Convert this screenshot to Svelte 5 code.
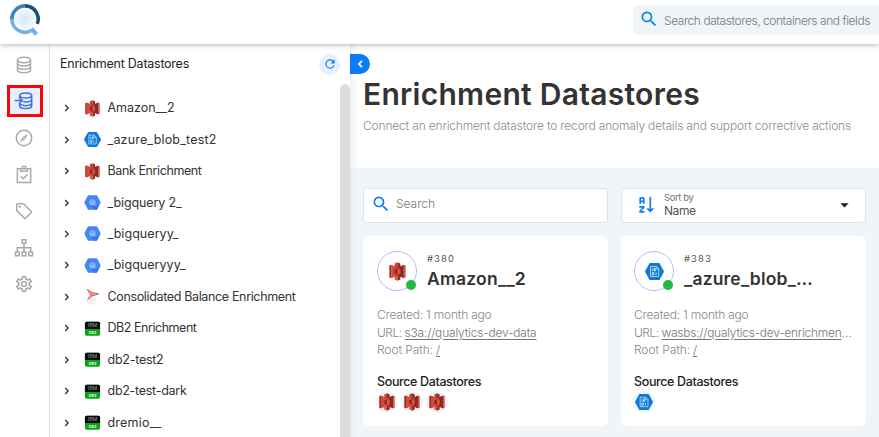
<script>
  const datastores = [
    { name: 'Amazon__2', kind: 's3', width: 67 },
    { name: '_azure_blob_test2', kind: 'azure', width: 109 },
    { name: 'Bank Enrichment', kind: 's3', width: 94 },
    { name: '_bigquery 2_', kind: 'bigquery', width: 74 },
    { name: '_bigqueryy_', kind: 'bigquery', width: 71 },
    { name: '_bigqueryyy_', kind: 'bigquery', width: 78 },
    { name: 'Consolidated Balance Enrichment', kind: 'sqlserver', width: 188 },
    { name: 'DB2 Enrichment', kind: 'db2', width: 89 },
    { name: 'db2-test2', kind: 'db2', width: 56 },
    { name: 'db2-test-dark', kind: 'db2', width: 79 },
    { name: 'dremio__', kind: 'db2', width: 54 }
  ];

  const cards = [
    { id: '#380', name: 'Amazon__2', nameWidth: 99, kind: 's3', url: 's3a://qualytics-dev-data', urlWidth: 132, more: '', sources: ['s3', 's3', 's3'] },
    { id: '#383', name: '_azure_blob_…', nameWidth: 129, kind: 'azure', url: 'wasbs://qualytics-dev-enrichmen', urlWidth: 180, more: '…', sources: ['azure'] }
  ];

  const nav = ['db', 'enrich', 'explore', 'checks', 'tags', 'tree', 'settings'];

  // Tracks the letters so that a label fills the given width.
  function track(node, width) {
    const natural = node.getBoundingClientRect().width;
    node.style.letterSpacing = `${(width - natural) / [...node.textContent].length}px`;
  }
</script>

{#snippet brand(kind, size)}
  {#if kind === 's3'}
    <svg width={size} height={size} viewBox="0 0 18 18">
      <path d="M1.300 3.200 3 2.600V15.400L1.300 14.800z" fill="#a32a22" />
      <path d="M3 2.600 7.500 4.500V13.500L3 15.400z" fill="#d9473b" />
      <path d="M16.700 3.200 15 2.600V15.400L16.700 14.800z" fill="#e05243" />
      <path d="M15 2.600 10.500 4.500V13.500L15 15.400z" fill="#8c2a22" />
      <path d="M7.500 4.500h3v9h-3z" fill="#b3342a" />
      <path d="M9 .2 6.300 1.400V4.800L9 5.300z" fill="#c83f35" /><path d="M9 .2l2.700 1.200V4.800L9 5.300z" fill="#8c3123" />
      <path d="M9 17.800l-2.700-1.200V13.200L9 12.700z" fill="#e05243" /><path d="M9 17.800l2.700-1.200V13.200L9 12.700z" fill="#8c3123" />
      <path d="M9 6.400 6.300 7v4L9 11.600z" fill="#8c2a22" /><path d="M9 6.400l2.700.6v4L9 11.600z" fill="#e05243" />
    </svg>
  {:else if kind === 'azure'}
    <svg width={size} height={size} viewBox="0 0 18 18">
      <path d="M5 1h8q.6 0 .9.500l3.800 6.800q.3.700 0 1.400l-3.800 6.800q-.3.500-.9.500H5q-.6 0-.9-.500L.3 9.700Q0 9 .3 8.300l3.800-6.800Q4.400 1 5 1z" fill="#0c79d8" />
      <path d="M5.200 4.300h5.600l2.200 2.200v7.200H5.200z" fill="none" stroke="#e4f2fd" stroke-width=".7" />
      <path d="M10.600 4.500v2.300h2.200" fill="none" stroke="#e4f2fd" stroke-width=".6" />
      <path d="M7 6.200v2.300M8.500 6.200h1.300v2.300H8.500zM7 10h1.300v2.300H7zM10.500 10v2.300" fill="none" stroke="#e4f2fd" stroke-width=".8" />
    </svg>
  {:else if kind === 'bigquery'}
    <svg width={size} height={size} viewBox="0 0 18 18">
      <path d="M5 1.200h8q.6 0 .9.500l3.500 6.600q.3.700 0 1.400l-3.500 6.600q-.3.500-.9.500H5q-.6 0-.9-.500L.6 9.700q-.3-.7 0-1.400l3.500-6.600q.3-.5.9-.500z" fill="#4386f5" />
      <path d="m11.500 11.500 4 1.500-2.200 3.600H11L7.500 12.500z" fill="#3a78dc" />
      <circle cx="8.900" cy="8.800" r="2.700" fill="none" stroke="#dce9ff" stroke-width=".8" />
      <path d="M7.800 8.600v1.200M8.900 7.700v2.500M10 9v.9M11 10.900l1.300 1.300" stroke="#dce9ff" stroke-width=".8" />
    </svg>
  {:else if kind === 'sqlserver'}
    <svg width={size} height={size} viewBox="0 0 18 18">
      <path d="M3 1.500c3.500.8 4.500 2.500 7 3.300l6 1.400-6.500 2.300-4.800 3.700 2.200-4.800z" fill="#f5c6c6" />
      <path d="M3 1.500c3 .8 4 2.500 6.500 3.500L15.500 6.200M4 2.500l3 4.800-3 5 5-4 6.500-2M7 4.500l1 3.500M10 5.300l-1 3" fill="none" stroke="#d9474b" stroke-width=".9" />
      <path d="m3.500 13 4-2.500 4.500 1-.5 4-4.500 2-3-1.800zM7.500 10.500l-.5 7M3.500 13l8.500-1.500" fill="#f4f6f8" stroke="#d5d9de" stroke-width=".5" />
    </svg>
  {:else}
    <svg width={size} height={size} viewBox="0 0 18 18">
      <rect x="1" y="1.800" width="16" height="14.900" rx="1.800" fill="#0aa314" />
      <path d="M1 9.400V3.600Q1 1.800 2.800 1.800h12.400q1.800 0 1.800 1.800v5.800z" fill="#080808" />
      <text x="4" y="7.800" font-size="5" fill="#a0a0a0" textLength="10" lengthAdjust="spacingAndGlyphs">IBM</text>
      <text x="5" y="14.400" font-size="4.300" font-weight="700" fill="#d9ffd9" textLength="8" lengthAdjust="spacingAndGlyphs">DB2</text>
    </svg>
  {/if}
{/snippet}

{#snippet magnify(size)}
  <svg class="blue" width={size} height={size} viewBox="0 0 24 24"><path d="M9.500 3A6.500 6.500 0 0 1 16 9.500C16 11.110 15.410 12.590 14.440 13.730L14.710 14H15.500L20.500 19L19 20.500L14 15.500V14.710L13.730 14.440C12.590 15.410 11.110 16 9.500 16A6.500 6.500 0 0 1 3 9.500A6.500 6.500 0 0 1 9.500 3M9.500 5C7 5 5 7 5 9.500C5 12 7 14 9.500 14C12 14 14 12 14 9.500C14 7 12 5 9.500 5Z" /></svg>
{/snippet}

<div class="app">
  <header>
    <svg class="logo" width="34" height="34" viewBox="0 0 34 34">
      <defs><radialGradient id="lens"><stop offset="0" stop-color="#d5eafb" /><stop offset="1" stop-color="#f1f8fd" /></radialGradient></defs>
      <circle cx="17" cy="16" r="10.300" fill="url(#lens)" />
      <g fill="none" stroke-width="3.600">
        <path d="M17 2.900A13.100 13.100 0 0 0 3.900 16.500" stroke="#3b83bd" />
        <path d="M17 2.900A13.100 13.100 0 0 1 29.200 20.900" stroke="#16527f" />
        <path d="M3.900 16A13.100 13.100 0 0 0 23 27.800" stroke="#73b1e4" />
        <path d="m23.500 25.500 4.800 5.800" stroke="#73b1e4" stroke-width="4.200" />
      </g>
    </svg>
    <div class="global-search">{@render magnify(20)}<span use:track={206}>Search datastores, containers and fields</span></div>
  </header>

  <div class="body">
    <nav>
      {#each nav as item}
        <div class="slot" class:active={item === 'enrich'}>
          <svg width="20" height="20" viewBox="0 0 24 24" fill="none" stroke="currentColor" stroke-width="1.800">
            {#if item === 'db'}
              <ellipse cx="12" cy="6" rx="7.800" ry="3.200" />
              <path d="M4.200 6v12c0 4.200 15.600 4.200 15.600 0V6M4.200 10c0 4.200 15.600 4.200 15.600 0M4.200 14c0 4.200 15.600 4.200 15.600 0" />
            {:else if item === 'enrich'}
              <ellipse cx="14" cy="5.500" rx="7.200" ry="3" />
              <path d="M6.800 5.500v2M6.800 15.500v2.500c0 4 14.400 4 14.400 0V5.500M11 12.700c4 1 10.200.2 10.200-2.700M7.500 15.700c2.500 2.800 13.700 2.500 13.700-1.700M.8 11.500H9.500M6 7.600l3.900 3.900L6 15.400" />
            {:else if item === 'explore'}
              <circle cx="12" cy="12" r="9.200" />
              <path d="m16.700 7.300-3.200 6.200-6.200 3.200 3.200-6.200z" fill="currentColor" stroke="none" /><circle cx="12" cy="12" r="1" fill="#fff" stroke="none" />
            {:else if item === 'checks'}
              <path d="M4 4.500h16v16.500H4zM8 4.500v3h8v-3M9.500 4a2.500 2.500 0 0 1 5 0M8 13.500l3 3 5.500-5.500" />
            {:else if item === 'tags'}
              <path d="M3.200 4.200q0-1 1-1h7.300l9.300 9.300q.7.700 0 1.400l-6.900 6.900q-.7.700-1.400 0L3.200 11.500z" /><circle cx="6.800" cy="6.800" r="1.400" fill="currentColor" stroke="none" />
            {:else if item === 'tree'}
              <path d="M9.800 2h4.400v4.400H9.800zM1.800 16.800h4.400v4.400H1.800zM9.800 16.800h4.400v4.400H9.800zM17.800 16.800h4.400v4.400h-4.400zM12 6.400v10.400M4 16.800v-5h16v5" />
            {:else}
              <path fill="currentColor" stroke="none" d="M12,8A4,4 0 0,1 16,12A4,4 0 0,1 12,16A4,4 0 0,1 8,12A4,4 0 0,1 12,8M12,10A2,2 0 0,0 10,12A2,2 0 0,0 12,14A2,2 0 0,0 14,12A2,2 0 0,0 12,10M10,22C9.75,22 9.54,21.82 9.5,21.58L9.13,18.93C8.5,18.68 7.96,18.34 7.44,17.94L4.95,18.95C4.73,19.03 4.46,18.95 4.34,18.73L2.34,15.27C2.21,15.05 2.27,14.78 2.46,14.63L4.57,12.97L4.5,12L4.57,11L2.46,9.37C2.27,9.22 2.21,8.95 2.34,8.73L4.34,5.27C4.46,5.05 4.73,4.96 4.95,5.05L7.44,6.05C7.96,5.66 8.5,5.32 9.13,5.07L9.5,2.42C9.54,2.18 9.75,2 10,2H14C14.25,2 14.46,2.18 14.5,2.42L14.87,5.07C15.5,5.32 16.04,5.66 16.56,6.05L19.05,5.05C19.27,4.96 19.54,5.05 19.66,5.27L21.66,8.73C21.79,8.95 21.73,9.22 21.54,9.37L19.43,11L19.5,12L19.43,13L21.54,14.63C21.73,14.78 21.79,15.05 21.66,15.27L19.66,18.73C19.54,18.95 19.27,19.04 19.05,18.95L16.56,17.95C16.04,18.34 15.5,18.68 14.87,18.93L14.5,21.58C14.46,21.82 14.25,22 14,22H10M11.25,4L10.88,6.61C9.68,6.86 8.62,7.5 7.85,8.39L5.44,7.35L4.69,8.65L6.8,10.2C6.4,11.37 6.4,12.64 6.8,13.8L4.68,15.36L5.43,16.66L7.86,15.62C8.63,16.5 9.68,17.14 10.87,17.38L11.24,20H12.76L13.13,17.39C14.32,17.14 15.37,16.5 16.14,15.62L18.57,16.66L19.32,15.36L17.2,13.81C17.6,12.64 17.6,11.37 17.2,10.2L19.31,8.65L18.56,7.35L16.15,8.39C15.38,7.5 14.32,6.86 13.12,6.62L12.75,4H11.25Z" />
            {/if}
          </svg>
        </div>
      {/each}
    </nav>

    <aside>
      <div class="side-head">
        <span use:track={129}>Enrichment Datastores</span>
        <button class="refresh" aria-label="Refresh">
          <svg width="14" height="14" viewBox="0 0 24 24"><path fill="#0a7df2" d="M17.650 6.350C16.200 4.900 14.210 4 12 4A8 8 0 0 0 4 12A8 8 0 0 0 12 20C15.730 20 18.840 17.450 19.730 14H17.650C16.830 16.330 14.610 18 12 18A6 6 0 0 1 6 12A6 6 0 0 1 12 6C13.660 6 15.140 6.690 16.220 7.780L13 11H20V4L17.650 6.350Z" /></svg>
        </button>
      </div>
      <div class="side-body">
        <ul>
          {#each datastores as d}
            <li>
              <svg class="chev" width="6" height="8" viewBox="0 0 6 8"><path d="m1.200 1 3 3-3 3" fill="none" stroke="#333" stroke-width="1.300" /></svg>
              <span class="brand">{@render brand(d.kind, 17)}</span>
              <span use:track={d.width}>{d.name}</span>
            </li>
          {/each}
        </ul>
        <div class="thumb"></div>
      </div>
    </aside>

    <main>
      <button class="toggle" aria-label="Collapse">
        <svg width="6" height="8" viewBox="0 0 6 8"><path d="M5 .8 1.800 4 5 7.200" fill="none" stroke="#fff" stroke-width="1.700" /></svg>
      </button>
      <section class="intro">
        <h1><span use:track={337}>Enrichment Datastores</span></h1>
        <p><span use:track={488}>Connect an enrichment datastore to record anomaly details and support corrective actions</span></p>
      </section>
      <section class="content">
        <div class="field">{@render magnify(20)}<span class="hint" use:track={39}>Search</span></div>
        <div class="field sort">
          <svg width="15" height="16" viewBox="0 0 15 16" fill="none" stroke="#0a7df2" stroke-width="1.700"><path d="M1.200 6.800V1.700Q1.200.9 2 .9h2q.8 0 .8.800v5.100M1.200 4.300h3.600M.3 9.800h4.300v.8L1.200 14v.8h4.300M11.300 0v13.500M8.300 11.300l3 3 3-3" /></svg>
          <div class="sort-text"><small><span use:track={29.5}>Sort by</span></small><span use:track={31.5}>Name</span></div>
          <svg class="caret" width="9" height="5" viewBox="0 0 9 5"><path d="M.3.300h8.400L4.500 4.500z" fill="#222" /></svg>
        </div>
        {#each cards as c}
          <article>
            <div class="card-head">
              <div class="avatar">{@render brand(c.kind, 19)}<i></i></div>
              <div class="titles">
                <small><span use:track={28}>{c.id}</span></small>
                <h2><span use:track={c.nameWidth}>{c.name}</span></h2>
              </div>
            </div>
            <div class="meta">
              <div><span use:track={114.500}>Created: 1 month ago</span></div>
              <div class="line"><span use:track={24.500}>URL:</span><span class="link"><a use:track={c.urlWidth} href="#url">{c.url}</a>{c.more}</span></div>
              <div class="line"><span use:track={56}>Root Path:</span><a href="#root">/</a></div>
            </div>
            <h3><span use:track={104}>Source Datastores</span></h3>
            <div class="sources">
              {#each c.sources as s}<span>{@render brand(s, 18)}</span>{/each}
            </div>
          </article>
        {/each}
      </section>
    </main>
  </div>
</div>

<style>
  :global(body) { overflow: hidden; }
  * { box-sizing: border-box; }
  .app { width: 879px; height: 437px; display: flex; flex-direction: column; overflow: hidden; background: #fff; font: 12px/16px Inter, 'Noto Sans', sans-serif; color: #333; white-space: nowrap; }
  svg { display: block; flex: none; }
  button { border: 0; padding: 0; display: flex; align-items: center; justify-content: center; }
  h1, h2, h3, p, ul { margin: 0; padding: 0; }
  .blue { fill: #0a7df2; }
  header { height: 44px; flex: none; display: flex; align-items: flex-start; justify-content: space-between; padding: 3px 0 0 8px; box-shadow: 0 1px 5px rgba(0, 0, 0, .3); z-index: 2; background: #fff; }
  .global-search { width: 246px; height: 30px; margin-top: 2px; padding-left: 6px; border-radius: 4px 0 0 4px; background: #f0f5fa; display: flex; align-items: center; gap: 5px; color: #777; font-weight: 300; }
  .global-search svg { margin-top: -2px; }
  .global-search span { padding-top: 2px; }
  .body { flex: 1; display: flex; min-height: 0; }
  nav { width: 50px; flex: none; border-right: 1px solid #e0e0e0; padding: 2.500px 1px 0 0; color: #aaa; }
  .slot { height: 36.600px; display: flex; align-items: center; justify-content: center; }
  .slot.active { width: 36px; height: 32px; margin: 2.300px 0 2.300px 7px; padding-right: 2px; border: 3px solid #f8060c; background: #e9effb; color: #3b70dd; }
  aside { width: 300px; flex: none; display: flex; flex-direction: column; }
  .side-head { height: 40px; flex: none; padding: 0 10px; display: flex; align-items: center; justify-content: space-between; color: #222; }
  .side-head, li { font-size: 12.500px; }
  .refresh { width: 21px; height: 21px; border-radius: 50%; background: #e8f0fd; }
  .side-body { flex: 1; min-height: 0; display: flex; overflow: hidden; }
  ul { width: 290px; padding: 8.500px 0 0 14px; list-style: none; }
  li { height: 31.450px; display: flex; align-items: center; }
  .chev { margin-right: 14px; }
  .brand { width: 23.500px; }
  .thumb { width: 10px; border-radius: 5px 5px 0 0; background: #dcdcdc; }
  main { flex: 1; min-width: 0; display: flex; flex-direction: column; position: relative; box-shadow: inset 10px 0 9px -9px rgba(0, 0, 0, .1); }
  .toggle { position: absolute; left: 0; top: 10px; width: 20px; height: 20px; padding-right: 1px; border-radius: 0 10px 10px 0; background: #087df5; }
  .intro { height: 124px; flex: none; padding: 32px 0 0 13px; }
  h1 { font-size: 30px; line-height: 36px; font-weight: 600; }
  p { margin-top: 6px; color: #8c8c8c; font-weight: 300; }
  .content { flex: 1; padding: 20px 13px 11px; background: rgba(215, 228, 241, .38); display: grid; grid-template-columns: 245px 245px; grid-template-rows: 35px 190px; gap: 13px; }
  .field { display: flex; align-items: center; padding: 0 8px 3px 7px; gap: 5px; border: 1px solid #e1e4e7; border-radius: 3px; background: #fff; color: #555; font-weight: 300; }
  .hint { color: #777; }
  .sort { padding: 0 16px 2px 17px; gap: 10px; }
  .sort-text { flex: 1; display: flex; flex-direction: column; line-height: 13px; align-items: flex-start; font-weight: 400; }
  .caret { margin-top: 1px; }
  small { font-size: 9.500px; line-height: 12px; color: #777; }
  article { background: #fff; border-radius: 6px; padding: 15px 14px 0; }
  article + article { padding-left: 13px; }
  .card-head { display: flex; gap: 10px; }
  .avatar { position: relative; width: 40px; height: 40px; flex: none; border: 1px solid #a8c4f4; border-radius: 50%; display: flex; align-items: center; justify-content: center; }
  .avatar i { position: absolute; right: 0; bottom: 0; width: 10px; height: 10px; border-radius: 50%; background: #23b843; }
  .titles { display: flex; flex-direction: column; align-items: flex-start; }
  .titles small { margin-top: 2px; color: #555; }
  h2 { margin-top: 4px; font-size: 17.500px; line-height: 20px; font-weight: 600; }
  .meta { margin-top: 15px; line-height: 17.500px; font-weight: 300; color: #888; }
  .line { display: flex; gap: 3px; }
  .line a { color: #777; text-underline-offset: 2px; }
  .link { display: flex; }
  h3 { margin-top: 15px; font-size: 12.500px; line-height: 16px; font-weight: 500; color: #222; }
  .sources { display: flex; gap: 3px; margin-top: 1px; margin-left: -1px; }
  .sources span { width: 22px; height: 22px; border-radius: 50%; background: #eff5fb; display: flex; align-items: center; justify-content: center; }
</style>
